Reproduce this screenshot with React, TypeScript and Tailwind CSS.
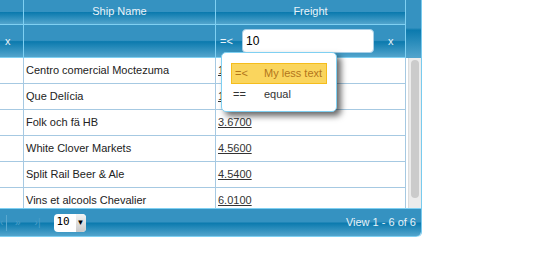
const glass =
  "bg-[linear-gradient(to_bottom,#3592c1_0%,#3592c1_48%,#0b7aae_52%,#53a5cd_100%)]";

const rows = [
  { name: "Centro comercial Moctezuma", freight: "1.3500" },
  { name: "Que Delícia", freight: "1.2700" },
  { name: "Folk och fä HB", freight: "3.6700" },
  { name: "White Clover Markets", freight: "4.5600" },
  { name: "Split Rail Beer & Ale", freight: "4.5400" },
  { name: "Vins et alcools Chevalier", freight: "6.0100" },
];

const App = () => {
  return (
    <div className="relative w-[547px] h-[262px] bg-white font-['Liberation_Sans',Arial,sans-serif] text-[11px] text-[#222]">
      <div className="w-[422px] border-r border-[#79cbee] rounded-br-[5px] overflow-hidden">
        {/* header */}
        <div className="flex h-[58px]">
          <div className="flex flex-col w-[406px]">
            <div className={`flex h-[25px] border-b border-[#7fd0f2] ${glass} text-[#eaf4fa]`}>
              <div className="w-[24px] border-r border-[#7fd0f2]" />
              <div className="w-[192px] border-r border-[#7fd0f2] flex justify-center pt-[3px]">Ship Name</div>
              <div className="w-[190px] border-r border-[#7fd0f2] flex justify-center pt-[3px]">Freight</div>
            </div>
            <div className={`flex h-[33px] border-b border-[#7fd0f2] ${glass} text-[#eaf4fa]`}>
              <div className="w-[24px] border-r border-[#7fd0f2] flex items-center pl-[5px]">x</div>
              <div className="w-[192px] border-r border-[#7fd0f2]" />
              <div className="w-[190px] border-r border-[#7fd0f2] flex items-center pl-[4px]">
                <span className="w-[22px]">=&lt;</span>
                <div className="w-[132px] h-[24px] bg-white border border-[#a9cfe6] rounded-[4px] flex items-center pl-[3px] text-[12px] text-black">
                  10
                </div>
                <span className="ml-[14px]">x</span>
              </div>
            </div>
          </div>
          <div className={`w-[15px] ${glass}`} />
        </div>

        {/* body */}
        <div className="flex h-[150px] overflow-hidden">
          <div className="w-[406px]">
            {rows.map((r) => (
              <div key={r.name} className="flex h-[26px] border-b border-[#a6c9e2] shrink-0">
                <div className="w-[24px] border-r border-[#a6c9e2]" />
                <div className="w-[192px] border-r border-[#a6c9e2] flex items-center pl-[2px]">{r.name}</div>
                <div className="w-[190px] border-r border-[#a6c9e2] flex items-center pl-[2px]">
                  <span className="underline text-[#333]">{r.freight}</span>
                </div>
              </div>
            ))}
          </div>
          <div className="w-[15px] pl-[2px] bg-white">
            <div className="h-full bg-[#ececec] border-l border-[#dcdcdc] pt-[2px] flex justify-center">
              <div className="w-[8px] h-[138px] rounded-full bg-[#cbcbcb]" />
            </div>
          </div>
        </div>

        {/* footer */}
        <div className={`flex items-center h-[29px] border-b border-t border-[#7fd0f2] ${glass} rounded-br-[5px]`}>
          <span className="text-[#4b9fc9] text-[10px] w-[6px]">‹</span>
          <span className="w-px h-[16px] bg-[#5aa8cf]" />
          <span className="text-[#4b9fc9] text-[10px] ml-[8px]">»</span>
          <span className="text-[#4b9fc9] text-[10px] ml-[14px]">›|</span>
          <div className="ml-[13px] flex h-[18px] w-[32px] bg-white rounded-[4px] overflow-hidden">
            <span className="flex-1 flex items-center pl-[3px] font-['DejaVu_Sans_Mono',monospace] text-[11px] text-black">10</span>
            <span className="w-[10px] flex items-center justify-center bg-[linear-gradient(to_bottom,#f4f4f4,#c9c9c9)] text-[8px] text-black">▼</span>
          </div>
          <span className="ml-auto pr-[5px] text-[#e6f2f9]">View 1 - 6 of 6</span>
        </div>
      </div>

      {/* filter operator menu */}
      <div className="absolute left-[221px] top-[52px] w-[116px] h-[60px] bg-white border border-[#7fd0f2] rounded-[5px] shadow-[4px_4px_6px_rgba(0,0,0,0.6)] pt-[10px] pl-[9px]">
        <div className="flex items-center w-[96px] h-[21px] bg-[#fad55d] border border-[#f5bd1c] text-[#b3761b]">
          <span className="w-[32px] pl-[3px]">=&lt;</span>
          <span>My less text</span>
        </div>
        <div className="flex items-center h-[20px] text-[#333]">
          <span className="w-[33px] pl-[2px]">==</span>
          <span>equal</span>
        </div>
      </div>
    </div>
  );
};

export default App;
